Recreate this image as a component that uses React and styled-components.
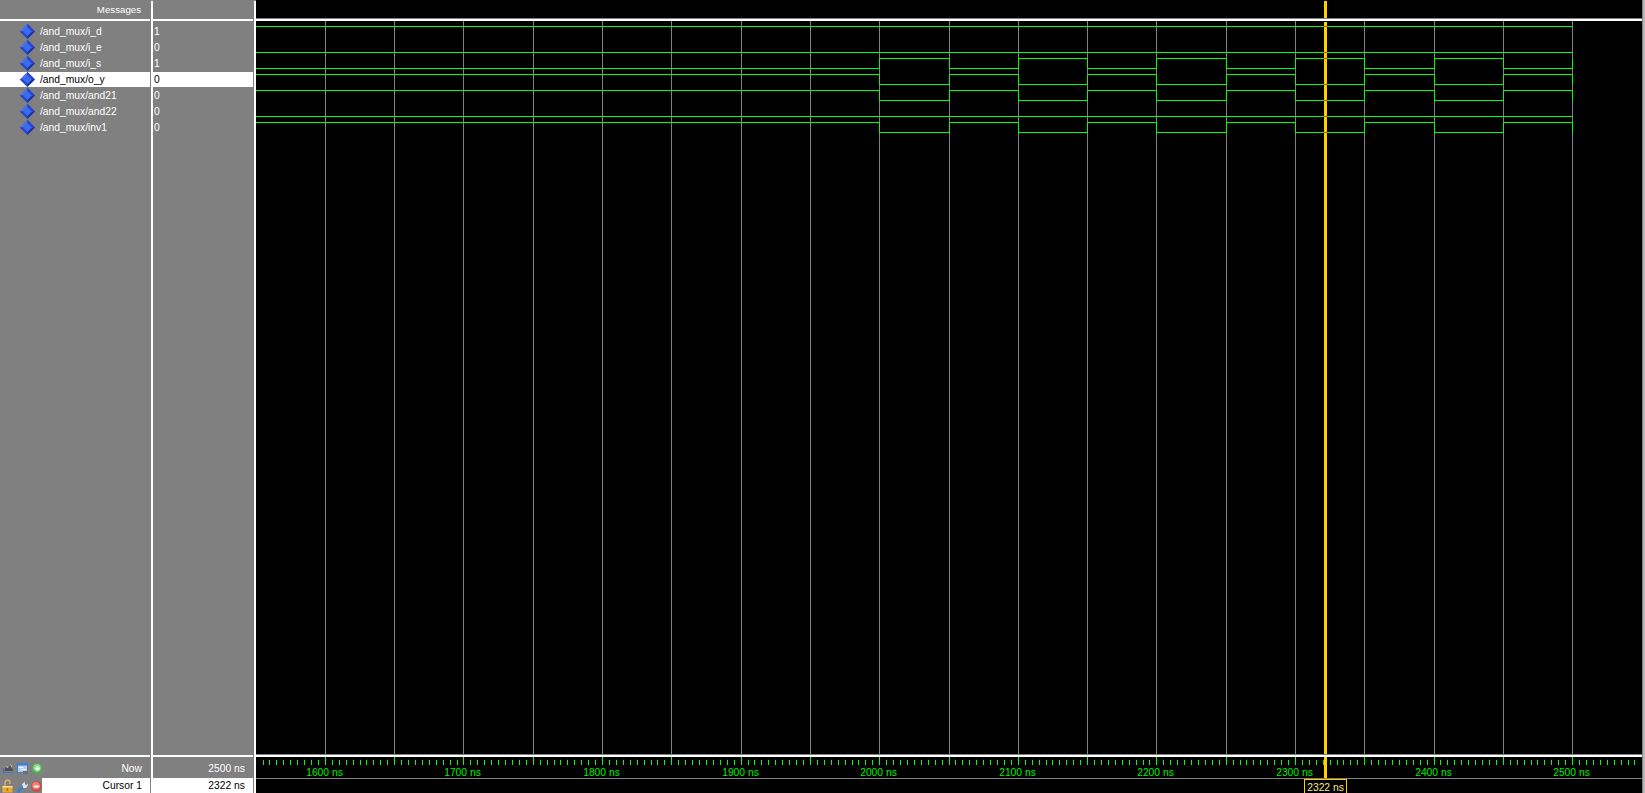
import React from "react";
import styled, { createGlobalStyle } from "styled-components";

const Global = createGlobalStyle`
  html, body { margin: 0; padding: 0; background: #000; overflow: hidden; }
  #root { width: 1645px; height: 793px; }
`;

const Green = "#00ff00";
const Yellow = "#ffd000";
const xAt = (t) => Math.floor(325.4 + (t - 1600) * 1.3858);

const Window = styled.div`
  display: flex;
  width: 1645px;
  height: 793px;
  font-family: "Liberation Sans", Arial, sans-serif;
  font-size: 10.3px;
  color: #fff;
  background: #808080;
`;

const Pane = styled.div`
  display: flex;
  flex-direction: column;
  flex: none;
  width: ${(p) => p.$width}px;
  background: #808080;
`;

const Gutter = styled.div`
  display: flex;
  flex: none;
  width: 2px;
  padding: 1px 0 0 1px;
  background: #808080;
`;

const GutterLine = styled.div`
  flex: 1;
  background: #fff;
`;

const PaneHeader = styled.div`
  height: 19px;
  flex: none;
  font-size: 9.7px;
  line-height: 19px;
  text-align: right;
  padding-right: 9px;
`;

const Rule = styled.div`
  height: 2px;
  flex: none;
  background: #fff;
`;

const Rows = styled.div`
  flex: 1;
  padding-top: 3px;
`;

const Row = styled.div`
  display: flex;
  align-items: center;
  height: 15px;
  margin-bottom: 1px;
  background: ${(p) => (p.$selected ? "#fff" : "transparent")};
  color: ${(p) => (p.$selected ? "#000" : "#fff")};
  white-space: nowrap;
`;

const DiamondIcon = styled.svg`
  flex: none;
  width: 15px;
  height: 15px;
  margin-left: 20px;
`;

const SignalName = styled.span`
  margin-left: 5px;
`;

const SignalValue = styled.span`
  margin-left: 1px;
`;

const Footer = styled.div`
  height: 36px;
  flex: none;
  display: flex;
  flex-direction: column;
`;

const FooterRow = styled.div`
  display: flex;
  align-items: center;
  height: ${(p) => p.$h}px;
  flex: none;
`;

const IconCell = styled.div`
  display: flex;
  align-items: ${(p) => (p.$low ? "flex-end" : "center")};
  gap: 3px;
  width: 42px;
  height: 100%;
  padding: ${(p) => (p.$low ? "0 0 0 2px" : "1px 0 0 3px")};
  box-sizing: border-box;
  flex: none;
  background: #808080;
`;

const IconSvg = styled.svg`
  display: block;
  flex: none;
  margin-left: ${(p) => p.$left || 0}px;
  margin-bottom: ${(p) => p.$bottom || 0}px;
`;

const FooterLabel = styled.div`
  flex: 1;
  height: 100%;
  box-sizing: border-box;
  display: flex;
  align-items: center;
  justify-content: flex-end;
  padding: ${(p) => (p.$light ? "0 8px 0 0" : "1px 8px 0 0")};
  background: ${(p) => (p.$light ? "#fff" : "#808080")};
  color: ${(p) => (p.$light ? "#000" : "#fff")};
`;

const WaveColumn = styled.div`
  display: flex;
  flex-direction: column;
  width: 1386px;
  flex: none;
  background: #000;
`;

const WaveTop = styled.svg`
  display: block;
  flex: none;
  width: 1386px;
  height: 18px;
  background: #000;
`;

const GreyLine = styled.div`
  height: 1px;
  flex: none;
  background: #808080;
`;

const WaveCanvas = styled.svg`
  display: block;
  flex: none;
  width: 1386px;
  height: 733px;
`;

const Ruler = styled.svg`
  display: block;
  flex: none;
  width: 1386px;
  height: 36px;
  font-family: "Liberation Sans", Arial, sans-serif;
  font-size: 10.3px;
`;

const Scrollbar = styled.div`
  flex: 1;
  background: #b8b8b8;
  border-left: 1px solid #808080;
`;

const Diamond = () => (
  <DiamondIcon viewBox="0 0 15 15">
    <polygon points="7.5,0 15,7.5 7.5,15 0,7.5" fill="#1c2f9c" />
    <polygon points="7.5,0 0,7.5 3,7.5 7.5,3" fill="#4a78f6" />
    <polygon points="7.5,0 15,7.5 12,7.5 7.5,3" fill="#2a48c8" />
    <polygon points="0,7.5 7.5,15 7.5,12 3,7.5" fill="#2a48c8" />
    <polygon points="7.5,3 12,7.5 7.5,12 3,7.5" fill="#3f68f4" />
  </DiamondIcon>
);

const signals = [
  ["/and_mux/i_d", "1"],
  ["/and_mux/i_e", "0"],
  ["/and_mux/i_s", "1"],
  ["/and_mux/o_y", "0"],
  ["/and_mux/and21", "0"],
  ["/and_mux/and22", "0"],
  ["/and_mux/inv1", "0"],
];

const flat = [26, 52, 116];
const toggles = [
  { low: 68, high: 58, start: "low" },
  { low: 84, high: 74, start: "high" },
  { low: 100, high: 90, start: "high" },
  { low: 132, high: 122, start: "high" },
];

const END = xAt(2500);
const FIRST = xAt(2000);
const edges = Array.from({ length: 11 }, (_, i) => 2000 + i * 50);
const grid = Array.from({ length: 19 }, (_, i) => 1600 + i * 50);
const ticks = Array.from({ length: 199 }, (_, i) => 1555 + i * 5);
const labels = Array.from({ length: 10 }, (_, i) => 1600 + i * 100);
const CUR = 1324;

const togglePath = ({ low, high, start }) => {
  const idle = start === "low" ? low : high;
  const other = start === "low" ? high : low;
  let y = idle;
  let d = `M256 ${y + 0.5}H${FIRST + 0.5}`;
  edges.forEach((t, i) => {
    const x = xAt(t) + 0.5;
    y = i % 2 === 0 ? other : idle;
    d += `H${x}V${y + 0.5}`;
  });
  return d;
};

const redAt = [26, 52, 58, 84, 100, 116, 132];

const StatusIcon = ({ kind }) => {
  if (kind === "monitor")
    return (
      <IconSvg width="11" height="11" viewBox="0 0 11 11">
        <path d="M1 8 L3.5 3 L5 5.5 L7.5 1.5 L10 7 V8Z" fill="#4c505c" />
        <path d="M3.5 3 L4.6 5 M7.5 1.5 L8.8 4.4" stroke="#c8ccd4" strokeWidth="1" />
        <path d="M0.5 5 V9.5 H10.5" fill="none" stroke="#3f74c8" strokeWidth="1.2" />
      </IconSvg>
    );
  if (kind === "window")
    return (
      <IconSvg width="11" height="11" viewBox="0 0 11 11">
        <rect x="0" y="0" width="11" height="10" fill="#3f7fd0" />
        <rect x="1" y="2.5" width="9" height="6.5" fill="#b4cfee" />
        <rect x="2" y="4" width="4" height="1" fill="#ffffff" />
        <rect x="4" y="6" width="5" height="1" fill="#ffffff" />
        <rect x="6" y="8" width="5" height="3" fill="#6c7078" />
      </IconSvg>
    );
  if (kind === "plus")
    return (
      <IconSvg $left={1} width="11" height="11" viewBox="0 0 11 11">
        <circle cx="5.5" cy="5.5" r="5.4" fill="#4fae54" />
        <circle cx="5" cy="4.8" r="3.8" fill="#86da86" />
        <path d="M3 5.5H8M5.5 3V8" stroke="#fff" strokeWidth="1.6" />
      </IconSvg>
    );
  if (kind === "lock")
    return (
      <IconSvg width="11" height="14" viewBox="0 0 11 14">
        <path d="M3 7V3.5a2.5 2.5 0 0 1 5 0V5" fill="none" stroke="#d9b070" strokeWidth="1.4" />
        <rect x="0.5" y="7" width="10" height="6.5" fill="#e8ad2c" />
        <rect x="0.5" y="7" width="10" height="1.6" fill="#f8dc78" />
        <rect x="4.6" y="9.2" width="1.6" height="2.6" fill="#96691a" />
      </IconSvg>
    );
  if (kind === "wrench")
    return (
      <IconSvg $left={1} width="11" height="12" viewBox="0 0 11 12">
        <path d="M1.6 10.4 L6.2 5.6" stroke="#3f7fd0" strokeWidth="3" strokeLinecap="round" />
        <path d="M5 3.4 L7.6 0.6 L8 3.2 L9.2 4.2 L10.8 2.4 C11.2 5.6 9 7.6 6.4 7 Z" fill="#dde4ec" />
      </IconSvg>
    );
  return (
    <IconSvg $bottom={1} width="11" height="11" viewBox="0 0 11 11">
      <circle cx="5.5" cy="5.5" r="5.4" fill="#cc4a44" />
      <circle cx="5" cy="4.8" r="3.8" fill="#f08278" />
      <path d="M2.8 5.5H8.2" stroke="#fff" strokeWidth="1.7" />
    </IconSvg>
  );
};

export default function App() {
  return (
    <Window>
      <Global />
      <Pane $width={150}>
        <PaneHeader>Messages</PaneHeader>
        <Rule />
        <Rows>
          {signals.map(([name], i) => (
            <Row key={name} $selected={i === 3}>
              <Diamond />
              <SignalName>{name}</SignalName>
            </Row>
          ))}
        </Rows>
        <Rule />
        <Footer>
          <FooterRow $h={21}>
            <IconCell>
              <StatusIcon kind="monitor" />
              <StatusIcon kind="window" />
              <StatusIcon kind="plus" />
            </IconCell>
            <FooterLabel>Now</FooterLabel>
          </FooterRow>
          <FooterRow $h={15}>
            <IconCell $low>
              <StatusIcon kind="lock" />
              <StatusIcon kind="wrench" />
              <StatusIcon kind="minus" />
            </IconCell>
            <FooterLabel $light>Cursor 1</FooterLabel>
          </FooterRow>
        </Footer>
      </Pane>
      <Gutter>
        <GutterLine />
      </Gutter>
      <Pane $width={100}>
        <PaneHeader />
        <Rule />
        <Rows>
          {signals.map(([name, value], i) => (
            <Row key={name} $selected={i === 3}>
              <SignalValue>{value}</SignalValue>
            </Row>
          ))}
        </Rows>
        <Rule />
        <Footer>
          <FooterRow $h={21}>
            <FooterLabel>2500 ns</FooterLabel>
          </FooterRow>
          <FooterRow $h={15}>
            <FooterLabel $light>2322 ns</FooterLabel>
          </FooterRow>
        </Footer>
      </Pane>
      <Gutter>
        <GutterLine />
      </Gutter>
      <WaveColumn>
        <WaveTop viewBox="256 0 1386 18">
          <rect x={CUR} y="1" width="3" height="17" fill={Yellow} />
        </WaveTop>
        <GreyLine />
        <Rule />
        <WaveCanvas viewBox="256 21 1386 733" shapeRendering="crispEdges">
          {grid.map((t) => (
            <line key={t} x1={xAt(t) + 0.5} x2={xAt(t) + 0.5} y1="21" y2="754" stroke="#808080" />
          ))}
          {flat.map((y) => (
            <line key={y} x1="256" x2={END + 1} y1={y + 0.5} y2={y + 0.5} stroke={Green} />
          ))}
          {toggles.map((s) => (
            <path key={s.low} d={togglePath(s)} fill="none" stroke={Green} />
          ))}
          <rect x={CUR} y="22" width="3" height="732" fill={Yellow} />
          {redAt.map((y) => (
            <rect key={y} x={CUR} y={y} width="3" height="1" fill="#ff2a00" />
          ))}
        </WaveCanvas>
        <GreyLine />
        <Rule />
        <Ruler viewBox="256 757 1386 36">
          <g shapeRendering="crispEdges">
            {ticks.map((t) => {
              const major = t % 50 === 0;
              return (
                <rect
                  key={t}
                  x={xAt(t)}
                  y={major ? 757 : 760}
                  width="1"
                  height={major ? 8 : 5}
                  fill={Green}
                />
              );
            })}
            <rect x="256" y="778" width="1386" height="1" fill="#808080" />
            <rect x={CUR} y="757" width="3" height="21" fill={Yellow} />
            <rect x="1304.5" y="779.5" width="42" height="14" fill="#000" stroke={Yellow} />
          </g>
          {labels.map((t) => (
            <text key={t} x={xAt(t) - 0.5} y="776" textAnchor="middle" fill="#00f000">
              {t} ns
            </text>
          ))}
          <text x="1325.5" y="791" textAnchor="middle" fill="#ffe680">
            2322 ns
          </text>
        </Ruler>
      </WaveColumn>
      <Scrollbar />
    </Window>
  );
}
